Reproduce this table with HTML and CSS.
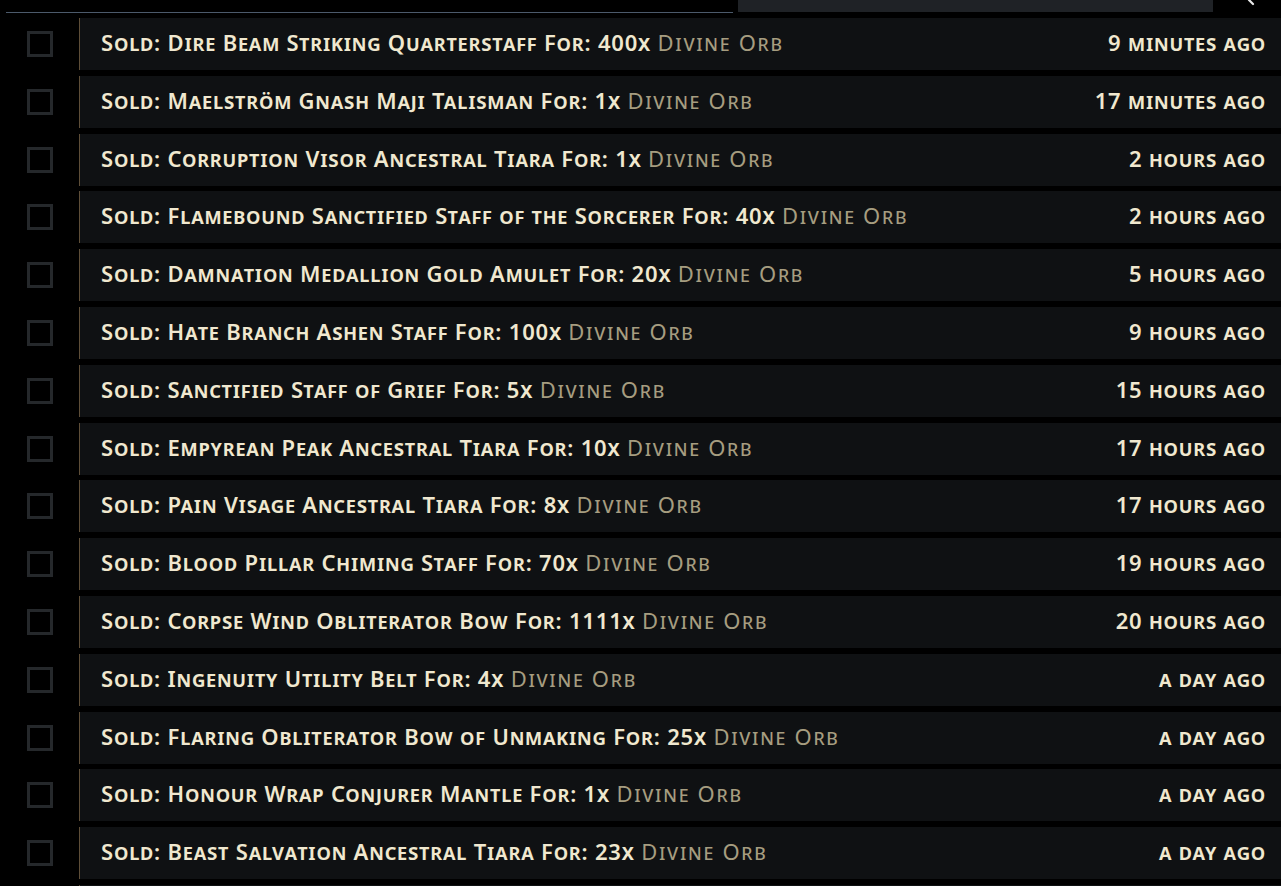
FILE: index.html
```html
<!DOCTYPE html>
<html>
<head>
<meta charset="utf-8">
<link rel="stylesheet" href="styles.css">
</head>
<body>
<div class="header">
  <div class="tabs"></div>
  <div class="search"></div>
  <div class="search-btn">
    <svg width="30" height="12" viewBox="0 0 30 12"><path d="M9 0 L13 4" stroke="#e8e8e8" stroke-width="2.2" fill="none" stroke-linecap="round"/></svg>
  </div>
</div>
<div class="list">
  <div class="row"><div class="check"><span class="box"></span></div><div class="item"><span class="msg">Sold: Dire Beam Striking Quarterstaff For: 400x <span class="cur">Divine Orb</span></span><span class="time">9 minutes ago</span></div></div>
  <div class="row"><div class="check"><span class="box"></span></div><div class="item"><span class="msg">Sold: Maelström Gnash Maji Talisman For: 1x <span class="cur">Divine Orb</span></span><span class="time">17 minutes ago</span></div></div>
  <div class="row"><div class="check"><span class="box"></span></div><div class="item"><span class="msg">Sold: Corruption Visor Ancestral Tiara For: 1x <span class="cur">Divine Orb</span></span><span class="time">2 hours ago</span></div></div>
  <div class="row"><div class="check"><span class="box"></span></div><div class="item"><span class="msg">Sold: Flamebound Sanctified Staff of the Sorcerer For: 40x <span class="cur">Divine Orb</span></span><span class="time">2 hours ago</span></div></div>
  <div class="row"><div class="check"><span class="box"></span></div><div class="item"><span class="msg">Sold: Damnation Medallion Gold Amulet For: 20x <span class="cur">Divine Orb</span></span><span class="time">5 hours ago</span></div></div>
  <div class="row"><div class="check"><span class="box"></span></div><div class="item"><span class="msg">Sold: Hate Branch Ashen Staff For: 100x <span class="cur">Divine Orb</span></span><span class="time">9 hours ago</span></div></div>
  <div class="row"><div class="check"><span class="box"></span></div><div class="item"><span class="msg">Sold: Sanctified Staff of Grief For: 5x <span class="cur">Divine Orb</span></span><span class="time">15 hours ago</span></div></div>
  <div class="row"><div class="check"><span class="box"></span></div><div class="item"><span class="msg">Sold: Empyrean Peak Ancestral Tiara For: 10x <span class="cur">Divine Orb</span></span><span class="time">17 hours ago</span></div></div>
  <div class="row"><div class="check"><span class="box"></span></div><div class="item"><span class="msg">Sold: Pain Visage Ancestral Tiara For: 8x <span class="cur">Divine Orb</span></span><span class="time">17 hours ago</span></div></div>
  <div class="row"><div class="check"><span class="box"></span></div><div class="item"><span class="msg">Sold: Blood Pillar Chiming Staff For: 70x <span class="cur">Divine Orb</span></span><span class="time">19 hours ago</span></div></div>
  <div class="row"><div class="check"><span class="box"></span></div><div class="item"><span class="msg">Sold: Corpse Wind Obliterator Bow For: 1111x <span class="cur">Divine Orb</span></span><span class="time">20 hours ago</span></div></div>
  <div class="row"><div class="check"><span class="box"></span></div><div class="item"><span class="msg">Sold: Ingenuity Utility Belt For: 4x <span class="cur">Divine Orb</span></span><span class="time">a day ago</span></div></div>
  <div class="row"><div class="check"><span class="box"></span></div><div class="item"><span class="msg">Sold: Flaring Obliterator Bow of Unmaking For: 25x <span class="cur">Divine Orb</span></span><span class="time">a day ago</span></div></div>
  <div class="row"><div class="check"><span class="box"></span></div><div class="item"><span class="msg">Sold: Honour Wrap Conjurer Mantle For: 1x <span class="cur">Divine Orb</span></span><span class="time">a day ago</span></div></div>
  <div class="row"><div class="check"><span class="box"></span></div><div class="item"><span class="msg">Sold: Beast Salvation Ancestral Tiara For: 23x <span class="cur">Divine Orb</span></span><span class="time">a day ago</span></div></div>
  <div class="row"><div class="check"><span class="box"></span></div><div class="item"></div></div>
</div>
</body>
</html>
```
FILE: styles.css
```css
html, body {
  margin: 0;
  padding: 0;
  background: #000;
  overflow: hidden;
}
body {
  width: 1281px;
  height: 886px;
  font-family: "Noto Sans", "DejaVu Sans", sans-serif;
}
.header {
  display: flex;
  align-items: flex-start;
  height: 18px;
}
.tabs {
  margin-left: 6px;
  width: 727px;
  height: 12px;
  border-bottom: 1px solid #4c5a6b;
}
.search {
  margin-left: 5px;
  width: 475px;
  height: 12px;
  background: #1f2226;
}
.search-btn {
  margin-left: 27px;
  height: 12px;
  display: flex;
}
.list {
  display: flex;
  flex-direction: column;
  gap: 5.8px;
}
.row {
  display: flex;
  height: 52px;
  flex-shrink: 0;
}
.check {
  width: 79px;
  display: flex;
  align-items: center;
  justify-content: center;
  flex-shrink: 0;
}
.box {
  width: 20px;
  height: 20px;
  border: 3px solid #25282b;
  background: #000;
  margin-left: 1px;
}
.item {
  flex: 1;
  display: flex;
  align-items: center;
  justify-content: space-between;
  background: #0f1113;
  border-left: 1px solid #5e4e38;
  padding: 0 16px 4px 21px;
  font-size: 22px;
  font-weight: 600;
  font-variant: small-caps;
  letter-spacing: 0.8px;
  color: #f0e8cf;
  white-space: nowrap;
}
.cur {
  color: #a69d80;
  font-weight: 400;
  letter-spacing: 1.7px;
}
.time {
  color: #f0e8cf;
  margin-right: -1px;
}
```
